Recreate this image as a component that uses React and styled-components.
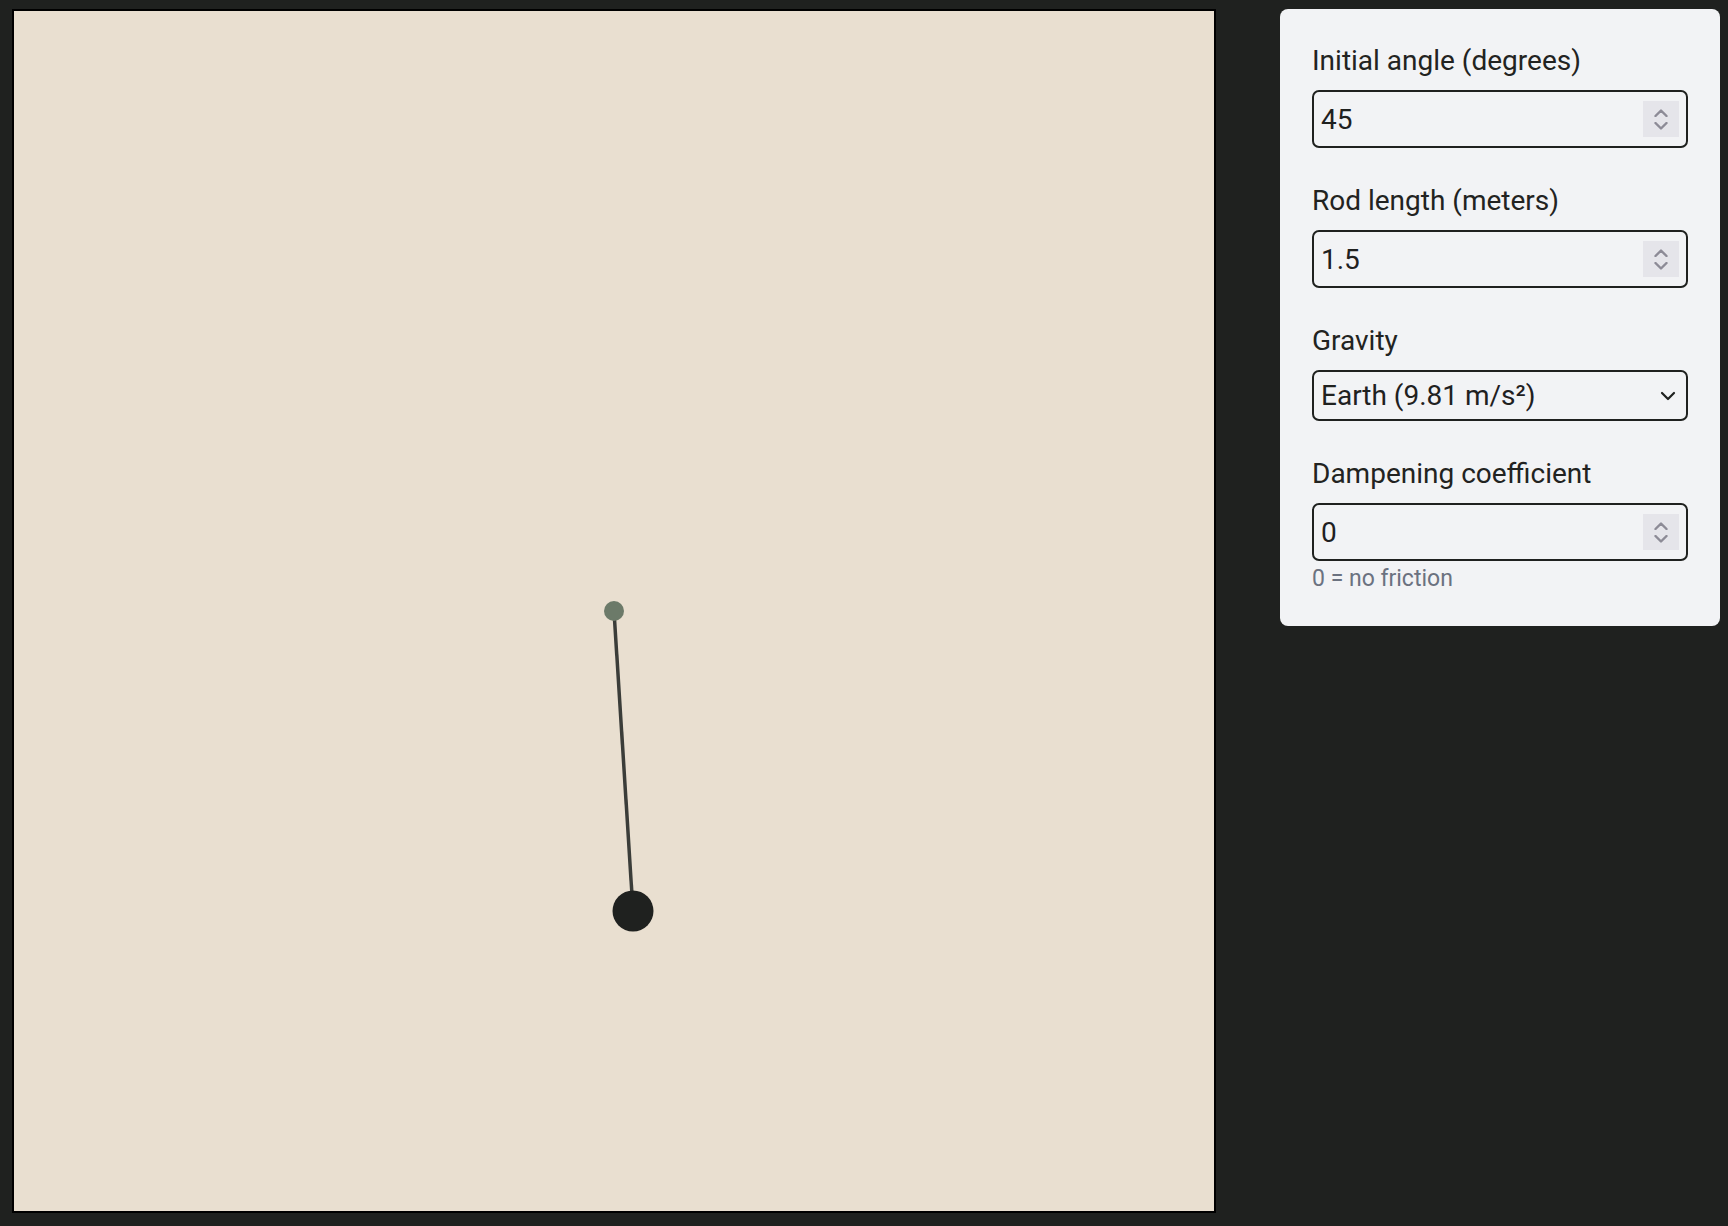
import styled, { createGlobalStyle } from 'styled-components';

const GlobalStyle = createGlobalStyle`
  html, body {
    margin: 0;
    padding: 0;
    background: #1f211f;
  }
  body {
    font-family: Roboto, "Liberation Sans", Arial, sans-serif;
  }
`;

const Page = styled.div`
  display: flex;
  align-items: flex-start;
  gap: 64px;
  padding: 9px 8px 0 12px;
  min-height: 1226px;
  box-sizing: border-box;
  background: #1f211f;
`;

const Stage = styled.div`
  flex: none;
  width: 1200px;
  height: 1200px;
  border: 2px solid #000;
  background: #e9dfd0;
`;

const Panel = styled.div`
  flex: none;
  width: 440px;
  box-sizing: border-box;
  padding: 32px 32px 33px;
  background: #f2f3f5;
  border-radius: 8px;
  display: flex;
  flex-direction: column;
  gap: 33px;
`;

const Field = styled.div`
  display: flex;
  flex-direction: column;
`;

const Label = styled.label`
  font-size: 28px;
  line-height: 39px;
  color: #222321;
  margin-bottom: 10px;
`;

const Control = styled.div`
  position: relative;
  height: ${(p) => p.$height}px;
`;

const NumberInput = styled.input`
  width: 100%;
  height: 100%;
  box-sizing: border-box;
  border: 2px solid #1f211f;
  border-radius: 7px;
  background: transparent;
  padding: 0 56px 0 7px;
  font-family: inherit;
  font-size: 28px;
  color: #1f211f;
  outline: none;
  appearance: textfield;
  -moz-appearance: textfield;
  &::-webkit-inner-spin-button,
  &::-webkit-outer-spin-button {
    -webkit-appearance: none;
    margin: 0;
  }
`;

const Spinner = styled.div`
  position: absolute;
  right: 9px;
  top: 50%;
  transform: translateY(-50%);
  width: 36px;
  height: 36px;
  background: #e5e5ea;
  display: flex;
  flex-direction: column;
  align-items: center;
  justify-content: center;
  gap: 5px;
  pointer-events: none;
`;

const Select = styled.select`
  width: 100%;
  height: 100%;
  box-sizing: border-box;
  border: 2px solid #1f211f;
  border-radius: 7px;
  background: transparent;
  padding: 0 40px 0 7px;
  font-family: inherit;
  font-size: 28px;
  color: #1f211f;
  outline: none;
  appearance: none;
  -webkit-appearance: none;
`;

const Caret = styled.div`
  position: absolute;
  right: 12px;
  top: 50%;
  transform: translateY(-50%);
  display: flex;
  pointer-events: none;
`;

const Hint = styled.div`
  font-size: 23px;
  line-height: 28px;
  color: #6b7280;
  margin-top: 4px;
`;

const Chevron = ({ up }) => (
  <svg width="14" height="8" viewBox="0 0 14 8">
    <path
      d={up ? 'M1.5 7 L7 1.5 L12.5 7' : 'M1.5 1 L7 6.5 L12.5 1'}
      fill="none"
      stroke="#8c8b96"
      strokeWidth="2.4"
      strokeLinecap="round"
      strokeLinejoin="round"
    />
  </svg>
);

const NumberField = ({ label, value, hint }) => (
  <Field>
    <Label>{label}</Label>
    <Control $height={58}>
      <NumberInput type="number" defaultValue={value} />
      <Spinner>
        <Chevron up />
        <Chevron />
      </Spinner>
    </Control>
    {hint && <Hint>{hint}</Hint>}
  </Field>
);

const Pendulum = () => {
  const pivot = { x: 600, y: 600 };
  const bob = { x: 619, y: 900 };
  return (
    <svg width="1200" height="1200" viewBox="0 0 1200 1200" style={{ display: 'block' }}>
      <line
        x1={pivot.x}
        y1={pivot.y}
        x2={bob.x}
        y2={bob.y}
        stroke="#3b3d39"
        strokeWidth="3.5"
      />
      <circle cx={pivot.x} cy={pivot.y} r="10" fill="#6c7a69" />
      <circle cx={bob.x} cy={bob.y} r="20.5" fill="#1f211f" />
    </svg>
  );
};

export default function App() {
  return (
    <Page>
      <GlobalStyle />
      <Stage>
        <Pendulum />
      </Stage>
      <Panel>
        <NumberField label="Initial angle (degrees)" value={45} />
        <NumberField label="Rod length (meters)" value={1.5} />
        <Field>
          <Label>Gravity</Label>
          <Control $height={51}>
            <Select defaultValue="earth">
              <option value="earth">Earth (9.81 m/s²)</option>
              <option value="moon">Moon (1.62 m/s²)</option>
              <option value="mars">Mars (3.71 m/s²)</option>
              <option value="jupiter">Jupiter (24.79 m/s²)</option>
            </Select>
            <Caret>
              <svg width="16" height="10" viewBox="0 0 16 10">
                <path
                  d="M2 2 L8 8 L14 2"
                  fill="none"
                  stroke="#1f211f"
                  strokeWidth="2.2"
                  strokeLinecap="round"
                  strokeLinejoin="round"
                />
              </svg>
            </Caret>
          </Control>
        </Field>
        <NumberField label="Dampening coefficient" value={0} hint="0 = no friction" />
      </Panel>
    </Page>
  );
}
